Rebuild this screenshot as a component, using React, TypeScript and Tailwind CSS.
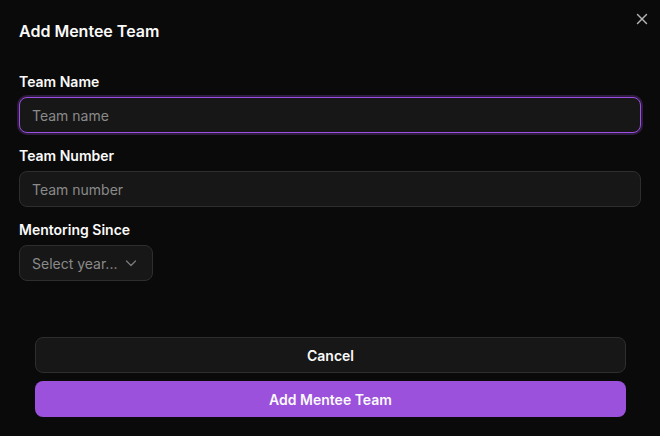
import React from "react";

export default function App() {
  return (
    <div
      className="relative w-[660px] h-[436px] bg-[#0a0a0a] text-[#fafafa] overflow-hidden"
      style={{ fontFamily: "Inter, 'Liberation Sans', sans-serif" }}
    >
      <button className="absolute left-[636px] top-[13px] w-[12px] h-[12px] flex items-center justify-center text-[#b5b5b5]">
        <svg width="12" height="12" viewBox="0 0 12 12" fill="none" stroke="currentColor" strokeWidth="1.4" strokeLinecap="round">
          <path d="M1.5 1.5 10.5 10.5" />
          <path d="M10.5 1.5 1.5 10.5" />
        </svg>
      </button>
      <div className="px-[19px] pt-[19px]">
        <h2 className="text-[16px] leading-[24px] font-semibold">Add Mentee Team</h2>
        <div className="mt-[29px] flex flex-col">
          <label className="text-[14px] leading-[20px] font-semibold">Team Name</label>
          <div className="mt-[5px] h-[36px] w-[622px] rounded-[8px] border border-[#9b4fe0] bg-[#171717] px-[12px] flex items-center text-[14px] text-[#8a8a8a] shadow-[0_0_0_2px_rgba(155,79,224,0.25)]">
            Team name
          </div>
          <label className="mt-[13px] text-[14px] leading-[20px] font-semibold">Team Number</label>
          <div className="mt-[5px] h-[36px] w-[622px] rounded-[8px] border border-[#2e2e2e] bg-[#171717] px-[12px] flex items-center text-[14px] text-[#8a8a8a]">
            Team number
          </div>
          <label className="mt-[13px] text-[14px] leading-[20px] font-semibold">Mentoring Since</label>
          <div className="mt-[5px] h-[36px] w-[134px] rounded-[8px] border border-[#2e2e2e] bg-[#171717] pl-[12px] pr-[15px] flex items-center justify-between text-[14px] text-[#8a8a8a]">
            <span>Select year...</span>
            <svg width="12" height="12" viewBox="0 0 12 12" fill="none" stroke="#7a7a7a" strokeWidth="1.3" strokeLinecap="round" strokeLinejoin="round">
              <path d="M1.5 4 6 8.5 10.5 4" />
            </svg>
          </div>
        </div>
      </div>
      <div className="mt-[56px] px-[35px] flex flex-col gap-[8px]">
        <button className="h-[36px] w-[591px] rounded-[8px] border border-[#2e2e2e] bg-[#171717] text-[14px] font-semibold text-[#fafafa]">
          Cancel
        </button>
        <button className="h-[36px] w-[591px] rounded-[8px] bg-[#9b51dc] text-[14px] font-semibold text-[#fafafa]">
          Add Mentee Team
        </button>
      </div>
    </div>
  );
}
